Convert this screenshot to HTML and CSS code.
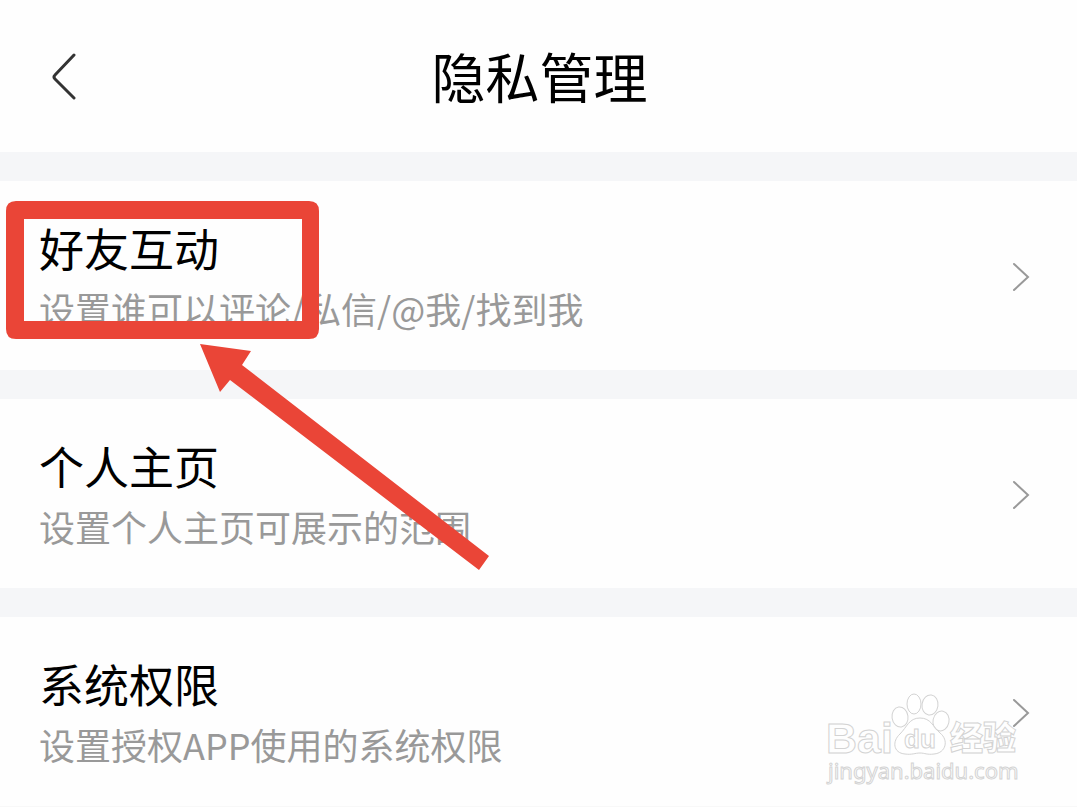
FILE: index.html
```
<!DOCTYPE html>
<html lang="zh-CN">
<head>
    <meta charset="UTF-8">
    <meta name="viewport" content="width=device-width, initial-scale=1.0">
    <title>隐私管理</title>
    <link rel="stylesheet" href="styles.css">
</head>
<body>
    <header class="header">
        <button class="back" type="button" aria-label="返回">
            <svg width="26" height="48" viewBox="0 0 26 48">
                <path d="M23 3 L4 23 Q2 25 4 27 L23 46"/>
            </svg>
        </button>
        <h1>隐私管理</h1>
    </header>

    <main class="list">
        <a class="item" href="#friends">
            <div class="item-text">
                <h2>好友互动</h2>
                <p>设置谁可以评论/私信/@我/找到我</p>
            </div>
            <svg class="arrow" width="20" height="32" viewBox="0 0 20 32"><path d="M3 3 L17 16 L3 29"/></svg>
        </a>
        <a class="item" href="#homepage">
            <div class="item-text">
                <h2>个人主页</h2>
                <p>设置个人主页可展示的范围</p>
            </div>
            <svg class="arrow" width="20" height="32" viewBox="0 0 20 32"><path d="M3 3 L17 16 L3 29"/></svg>
        </a>
        <a class="item" href="#permissions">
            <div class="item-text">
                <h2>系统权限</h2>
                <p>设置授权APP使用的系统权限</p>
            </div>
            <svg class="arrow" width="20" height="32" viewBox="0 0 20 32"><path d="M3 3 L17 16 L3 29"/></svg>
        </a>

        <!-- red marker -->
        <svg class="marker" width="500" height="430" viewBox="0 0 500 430">
            <path class="marker-box" fill-rule="evenodd" d="M16 49 H309 Q319 49 319 59 V177 Q319 187 309 187 H16 Q6 187 6 177 V59 Q6 49 16 49 Z M24 67 V169 H302 V67 Z"/>
            <polygon points="200,192 251,199 242,213 489,404 479,418 230,228 220,240"/>
        </svg>

        <!-- watermark -->
        <svg class="watermark" width="200" height="96" viewBox="0 0 200 96">
            <text class="wm-logo" x="3" y="60">Bai</text>
            <ellipse cx="77" cy="24" rx="8" ry="10" transform="rotate(-8 77 24)"/>
            <ellipse cx="91" cy="11" rx="7" ry="10"/>
            <ellipse cx="107" cy="12" rx="8" ry="10" transform="rotate(8 107 12)"/>
            <ellipse cx="118" cy="28" rx="8" ry="10" transform="rotate(12 118 28)"/>
            <path d="M97 25 C108 25 110 34 117 40 C126 47 123 60 111 61 C104 62 102 60 97 60 C92 60 89 62 82 61 C70 60 69 48 77 41 C84 34 86 25 97 25 Z"/>
            <text class="wm-du" x="81" y="55">du</text>
            <text class="wm-cn" x="127" y="57">经验</text>
            <text class="wm-url" x="5" y="86">jingyan.baidu.com</text>
        </svg>
    </main>
</body>
</html>
```
FILE: styles.css
```
* {
    box-sizing: border-box;
}
body {
    margin: 0;
    background: #fefefe;
    color: #000;
    font-family: "Noto Sans CJK SC", sans-serif;
    overflow-x: hidden;
}
h1, h2, p {
    margin: 0;
    font-weight: 400;
}
.header {
    display: grid;
    grid-template-columns: 80px 1fr 78px;
    align-items: center;
    height: 152px;
}
.header h1 {
    font-size: 54px;
    line-height: 80px;
    text-align: center;
}
.back {
    display: flex;
    justify-content: flex-end;
    padding: 0 3px 0 0;
    border: none;
    background: none;
    cursor: pointer;
}
.back path {
    fill: none;
    stroke: #333;
    stroke-width: 3;
    stroke-linecap: round;
}
.list {
    position: relative;
    border-bottom: 2px solid #f8f8f8;
}
.item {
    display: flex;
    align-items: center;
    justify-content: space-between;
    padding: 38px 46px 36px 39px;
    border-top: 29px solid #f5f6f8;
    color: #000;
    text-decoration: none;
}
.item h2 {
    font-size: 45px;
    line-height: 57px;
}
.item p {
    margin-top: 6px;
    color: #999;
    font-size: 36px;
    line-height: 52px;
}
.arrow {
    flex-shrink: 0;
}
.arrow path {
    fill: none;
    stroke: #999;
    stroke-width: 2;
    stroke-linecap: round;
}
.marker {
    position: absolute;
    top: 0;
    left: 0;
    fill: #ea4537;
    pointer-events: none;
}
.watermark {
    position: absolute;
    right: 54px;
    bottom: 17px;
    fill: #fff;
    fill-opacity: 0.6;
    stroke: #d3d3d3;
    stroke-width: 1;
    pointer-events: none;
}
.wm-logo, .wm-du {
    font-family: "Liberation Sans", sans-serif;
    font-weight: 700;
}
.wm-logo {
    font-size: 43px;
}
.wm-du {
    font-size: 26px;
}
.wm-cn {
    font-size: 33px;
    font-weight: 900;
}
.wm-url {
    font-family: "Noto Sans", sans-serif;
    font-size: 22px;
}
```
